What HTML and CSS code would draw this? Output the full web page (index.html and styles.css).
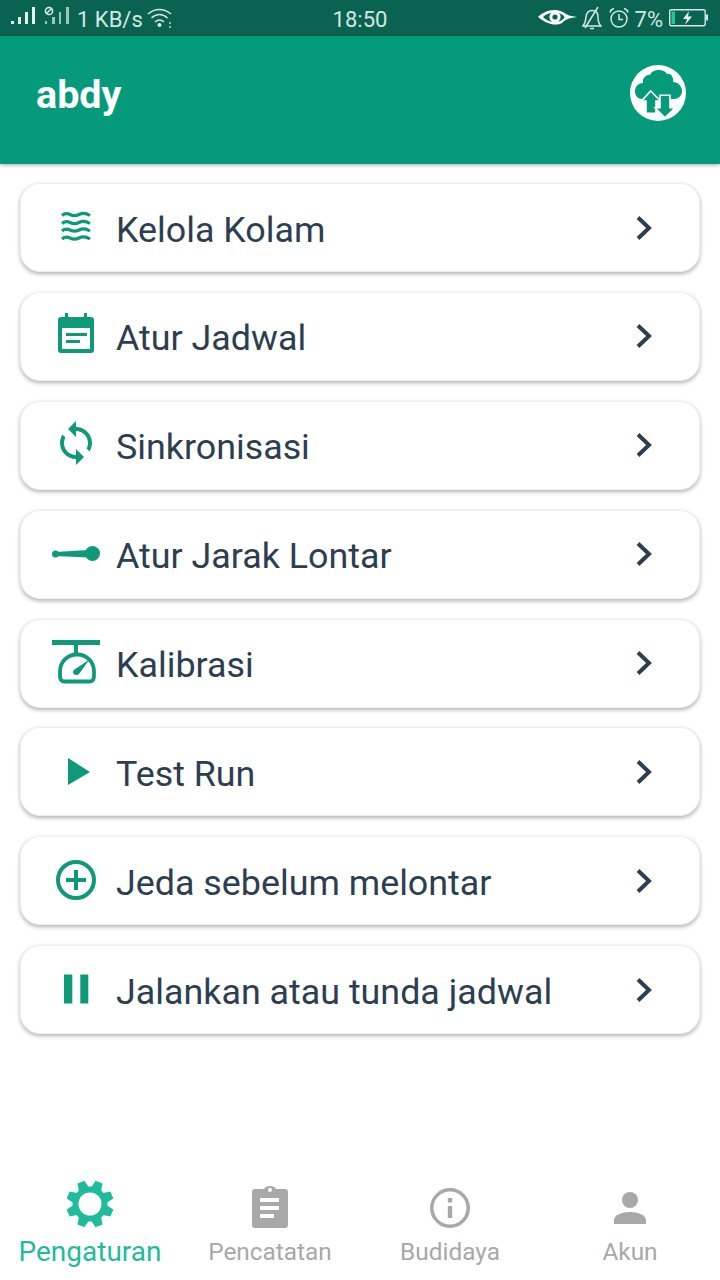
FILE: index.html
```html
<!DOCTYPE html>
<html>
<head>
    <title>Pengaturan</title>
    <meta name="viewport" content="width=device-width, initial-scale=1.0">
    <link rel="stylesheet" href="styles.css">
</head>
<body>
    <div id="screen">
        <div class="status-bar">
            <div class="status-left">
                <svg class="sig" width="25" height="24" viewBox="0 0 25 24"><g fill="#e3f1ec"><rect x="0" y="15" width="3" height="3"/><rect x="7" y="11" width="3" height="7"/><rect x="14" y="6" width="3" height="12"/><rect x="21" y="1" width="3" height="17"/></g></svg>
                <svg class="sig2" width="26" height="24" viewBox="0 0 26 24"><g fill="#9cc8ba"><rect x="1" y="15" width="2" height="3"/><rect x="8" y="11" width="3" height="7"/><rect x="15" y="6" width="2" height="12"/><rect x="22" y="1" width="3" height="17"/></g><circle cx="5" cy="5" r="3.6" fill="none" stroke="#e3f1ec" stroke-width="1.5"/><path d="M2.5 7.5L7.5 2.5" stroke="#e3f1ec" stroke-width="1.5"/></svg>
                <span class="net">1 KB/s</span>
                <svg class="wifi" width="25" height="24" viewBox="0 0 25 24"><g fill="none" stroke="#d3e8e1" stroke-width="1.6"><path d="M1 8C8 2 17 2 24 8"/><path d="M4.5 12C9.5 7.5 15.5 7.5 20.5 12"/><path d="M8 16C10.8 13.5 14.2 13.5 17 16"/></g><circle cx="12.5" cy="19" r="2" fill="#e3f1ec"/><circle cx="23" cy="17" r="1" fill="#b7d8cc"/><circle cx="23" cy="21" r="1" fill="#b7d8cc"/></svg>
            </div>
            <div class="clock">18:50</div>
            <div class="status-right">
                <svg class="eye" width="41" height="24" viewBox="0 0 41 24"><path d="M1 11C8 4 20 1 29 8C32 10 36 10 40 11L34 12C30 13 28 14 25 17C18 21 8 17 1 11Z" fill="#fff"/><path d="M6 11C11 6 20 5 26 9C28 11 28 12 25 14C19 18 11 16 6 11Z" fill="#0a6350"/><circle cx="18" cy="11" r="5.6" fill="#fff"/><circle cx="18" cy="11" r="2.6" fill="#0a6350"/></svg>
                <svg class="bell" width="20" height="24" viewBox="0 0 20 24"><g fill="none" stroke="#d3e8e1" stroke-width="1.5"><path d="M1 20H19C16 17 16 14 16 11C16 7 14 4.500 10 4.500C6 4.500 4.500 7 4 11C3.800 14 3.500 17 1 20Z"/><path d="M16 1L3 22"/><path d="M8 22.500H12"/></g></svg>
                <svg class="alarm" width="20" height="24" viewBox="0 0 20 24"><g fill="none" stroke="#d3e8e1" stroke-width="1.5"><circle cx="10" cy="13" r="8"/><path d="M10 8V13.500H14"/><path d="M1 6.500C1.500 4 3 3 5 2.500"/><path d="M19 6.500C18.500 4 17 3 15 2.500"/></g></svg>
                <span class="pct">7%</span>
                <svg class="batt" width="40" height="24" viewBox="0 0 40 24"><rect x="0.7" y="3.700" width="35.500" height="16" rx="1.500" fill="none" stroke="#d3e8e1" stroke-width="1.400"/><rect x="2.500" y="5.500" width="3.500" height="12.500" fill="#25c79a"/><rect x="37" y="8.500" width="2" height="6" fill="#d3e8e1"/><path d="M20 5L14 13H18L16 19L23 10.500H19L20 5Z" fill="#e3f1ec"/></svg>
            </div>
        </div>

        <div class="app-bar">
            <h1 class="user">abdy</h1>
            <svg class="cloud" width="56" height="56" viewBox="0 0 56 56">
                <circle cx="28" cy="28" r="28" fill="#fff"/>
                <path d="M12 34C7 34 5 30 5 26C5 21 9 18 13 18C12 13 17 9 20 10C22 4 34 3 37 9C41 8 44 13 43 17C48 17 52 21 52 26C52 31 48 34 44 34Z" fill="#059a7a"/>
                <path d="M20.700 26L30.500 36H26V48.300H16V36H11.500Z" fill="#059a7a" stroke="#fff" stroke-width="1.600"/>
                <path d="M35 52.700L45 42.700H40V30.300H30V42.700H25Z" fill="#059a7a" stroke="#fff" stroke-width="1.600"/>
            </svg>
        </div>

        <div class="menu">
            <div class="card">
                <svg class="ic" viewBox="0 0 48 48"><g fill="none" stroke="#0e9a78" stroke-width="3.200"><path d="M10 11.500C13 9 15 9 18 10.500C21 12 24 12 27 10.500C30 9 34 9 38 11.500"/><path d="M10 19.500C13 17 15 17 18 18.500C21 20 24 20 27 18.500C30 17 34 17 38 19.500"/><path d="M10 27C13 24.500 15 24.500 18 26C21 27.500 24 27.500 27 26C30 24.500 34 24.500 38 27"/><path d="M10 35C13 32.500 15 32.500 18 34C21 35.500 24 35.500 27 34C30 32.500 34 32.500 38 35"/></g></svg>
                <span class="label">Kelola Kolam</span>
                <svg class="chev" viewBox="0 0 20 28"><path d="M4 3.500L15 14L4 24.500" fill="none" stroke="#2c3e50" stroke-width="4"/></svg>
            </div>
            <div class="card">
                <svg class="ic" viewBox="0 0 48 48"><path d="M9 5H13V1H16V5H32V1H35V5H39C41 5 42 6 42 8V38C42 40 41 41 39 41H9C7 41 6 40 6 38V8C6 6 7 5 9 5ZM10 16V37H38V16ZM14 21H35V24H14ZM14 28H28V31H14Z" fill="#0e9a78" fill-rule="evenodd"/></svg>
                <span class="label">Atur Jadwal</span>
                <svg class="chev" viewBox="0 0 20 28"><path d="M4 3.500L15 14L4 24.500" fill="none" stroke="#2c3e50" stroke-width="4"/></svg>
            </div>
            <div class="card">
                <svg class="ic" viewBox="0 1 24 24"><path d="M12 4V1L8 5l4 4V6c3.310 0 6 2.690 6 6 0 1.010-.25 1.970-.7 2.800l1.460 1.460C19.540 15.030 20 13.570 20 12c0-4.420-3.580-8-8-8zm0 14c-3.310 0-6-2.690-6-6 0-1.010.25-1.970.7-2.800L5.240 7.740C4.460 8.970 4 10.430 4 12c0 4.420 3.580 8 8 8v3l4-4-4-4v3z" fill="#0e9a78"/></svg>
                <span class="label">Sinkronisasi</span>
                <svg class="chev" viewBox="0 0 20 28"><path d="M4 3.500L15 14L4 24.500" fill="none" stroke="#2c3e50" stroke-width="4"/></svg>
            </div>
            <div class="card">
                <svg class="ic" viewBox="0 0 48 48"><circle cx="3.500" cy="24" r="3.500" fill="#0e9a78"/><circle cx="40.500" cy="23.500" r="7.500" fill="#0e9a78"/><path d="M3 22L36 20V27.500L3 26Z" fill="#0e9a78"/></svg>
                <span class="label">Atur Jarak Lontar</span>
                <svg class="chev" viewBox="0 0 20 28"><path d="M4 3.500L15 14L4 24.500" fill="none" stroke="#2c3e50" stroke-width="4"/></svg>
            </div>
            <div class="card">
                <svg class="ic" viewBox="0 0 48 48"><rect x="0" y="1" width="48" height="5" fill="#0e9a78"/><rect x="22" y="6" width="4" height="9" fill="#0e9a78"/><path d="M25 15.500C34 15.500 42 22 42 33C42 37 42.500 42.500 38 42.500H12C7.500 42.500 8 37 8 33C8 22 16 15.500 25 15.500Z" fill="none" stroke="#0e9a78" stroke-width="3.800"/><path d="M37.500 20.500L27 35C25 37 21 36 21 33C21 31 23 30 24 29.500Z" fill="#0e9a78"/></svg>
                <span class="label">Kalibrasi</span>
                <svg class="chev" viewBox="0 0 20 28"><path d="M4 3.500L15 14L4 24.500" fill="none" stroke="#2c3e50" stroke-width="4"/></svg>
            </div>
            <div class="card">
                <svg class="ic" viewBox="0 0 48 48"><path d="M16 10L38 24L16 37Z" fill="#0e9a78"/></svg>
                <span class="label">Test Run</span>
                <svg class="chev" viewBox="0 0 20 28"><path d="M4 3.500L15 14L4 24.500" fill="none" stroke="#2c3e50" stroke-width="4"/></svg>
            </div>
            <div class="card">
                <svg class="ic" viewBox="0 0 48 48"><circle cx="24" cy="23" r="18" fill="none" stroke="#0e9a78" stroke-width="4"/><path d="M14 23H34M24 13V33" stroke="#0e9a78" stroke-width="4"/></svg>
                <span class="label">Jeda sebelum melontar</span>
                <svg class="chev" viewBox="0 0 20 28"><path d="M4 3.500L15 14L4 24.500" fill="none" stroke="#2c3e50" stroke-width="4"/></svg>
            </div>
            <div class="card">
                <svg class="ic" viewBox="0 0 48 48"><rect x="12" y="8.500" width="8.300" height="29" fill="#0e9a78"/><rect x="28.300" y="8.500" width="8" height="29" fill="#0e9a78"/></svg>
                <span class="label">Jalankan atau tunda jadwal</span>
                <svg class="chev" viewBox="0 0 20 28"><path d="M4 3.500L15 14L4 24.500" fill="none" stroke="#2c3e50" stroke-width="4"/></svg>
            </div>
        </div>

        <div class="tabs">
            <div class="tab active">
                <svg class="tab-ic" viewBox="0 0 48 48">
                    <g fill="#1fbc9c">
                        <circle cx="24" cy="24" r="17.500"/>
                        <polygon points="18.500,9 20.200,0.300 27.800,0.300 29.500,9" transform="rotate(22.500 24 24)"/>
                        <polygon points="18.500,9 20.200,0.300 27.800,0.300 29.500,9" transform="rotate(67.500 24 24)"/>
                        <polygon points="18.500,9 20.200,0.300 27.800,0.300 29.500,9" transform="rotate(112.500 24 24)"/>
                        <polygon points="18.500,9 20.200,0.300 27.800,0.300 29.500,9" transform="rotate(157.500 24 24)"/>
                        <polygon points="18.500,9 20.200,0.300 27.800,0.300 29.500,9" transform="rotate(202.500 24 24)"/>
                        <polygon points="18.500,9 20.200,0.300 27.800,0.300 29.500,9" transform="rotate(247.500 24 24)"/>
                        <polygon points="18.500,9 20.200,0.300 27.800,0.300 29.500,9" transform="rotate(292.500 24 24)"/>
                        <polygon points="18.500,9 20.200,0.300 27.800,0.300 29.500,9" transform="rotate(337.500 24 24)"/>
                    </g>
                    <circle cx="24" cy="24" r="11.500" fill="#fff"/>
                </svg>
                <span class="tab-label">Pengaturan</span>
            </div>
            <div class="tab">
                <svg class="tab-ic" viewBox="0 -5 48 48"><path d="M9 4H18C19 0 29 0 30 4H39C41 4 42 5 42 7V40C42 42 41 43 39 43H9C7 43 6 42 6 40V7C6 5 7 4 9 4Z" fill="#a8a8a8"/><circle cx="24" cy="5" r="2" fill="#fff"/><rect x="14" y="13" width="19" height="4" fill="#fff"/><rect x="14" y="21" width="19" height="4" fill="#fff"/><rect x="14" y="29" width="14" height="4" fill="#fff"/></svg>
                <span class="tab-label">Pencatatan</span>
            </div>
            <div class="tab">
                <svg class="tab-ic" viewBox="0 -4 48 48"><circle cx="24" cy="24" r="18.200" fill="none" stroke="#a8a8a8" stroke-width="3.500"/><rect x="21.800" y="22" width="4.400" height="12" fill="#a8a8a8"/><rect x="21.800" y="14" width="4.400" height="4.500" fill="#a8a8a8"/></svg>
                <span class="tab-label">Budidaya</span>
            </div>
            <div class="tab">
                <svg class="tab-ic" viewBox="0 -4 48 48"><circle cx="24" cy="16" r="8" fill="#a8a8a8"/><path d="M8 40V36C8 31 16 28 24 28C32 28 40 31 40 36V40Z" fill="#a8a8a8"/></svg>
                <span class="tab-label">Akun</span>
            </div>
        </div>
    </div>
</body>
</html>
```

FILE: styles.css
```css
body {
    font-family: Roboto, Arial, sans-serif;
    background-color: #fff;
    margin: 0;
    padding: 0;
}
#screen {
    width: 720px;
    height: 1280px;
    display: flex;
    flex-direction: column;
    overflow: hidden;
}
.status-bar {
    height: 36px;
    flex: none;
    background-color: #0a6350;
    color: #d3e8e1;
    font-size: 22px;
    display: grid;
    grid-template-columns: 1fr auto 1fr;
    align-items: center;
}
.clock,
.net,
.pct {
    padding-top: 2px;
}
.status-left {
    display: flex;
    align-items: center;
    padding-left: 11px;
}
.status-left svg,
.status-right svg {
    display: block;
}
.sig2 {
    margin-left: 8px;
}
.net {
    margin-left: 7px;
}
.wifi {
    margin-left: 4px;
}
.status-right {
    display: flex;
    align-items: center;
    justify-content: flex-end;
    padding-right: 11px;
}
.bell {
    margin-left: 4px;
}
.alarm {
    margin-left: 7px;
}
.pct {
    margin-left: 6px;
}
.batt {
    margin-left: 6px;
}
.app-bar {
    height: 128px;
    flex: none;
    box-sizing: border-box;
    background-color: #059a7a;
    box-shadow: 0 1px 4px rgba(0, 0, 0, 0.35);
    display: flex;
    align-items: center;
    justify-content: space-between;
    padding: 0 34px 15px 36px;
    position: relative;
}
.user {
    margin: 0;
    padding-top: 3px;
    color: #fff;
    font-size: 39.5px;
    font-weight: bold;
}
.menu {
    display: flex;
    flex-direction: column;
    gap: 19.9px;
    padding: 19px 20px 0;
}
.card {
    height: 89px;
    box-sizing: border-box;
    background-color: #fff;
    border: 1px solid #efefef;
    border-radius: 20px;
    box-shadow: 0 2px 4px rgba(0, 0, 0, 0.3);
    display: flex;
    align-items: center;
    padding-left: 31px;
}
.ic {
    width: 48px;
    height: 48px;
    flex: none;
}
.label {
    margin-left: 16px;
    font-size: 35.85px;
    color: #2c3e50;
    padding-top: 4px;
}
.chev {
    width: 20px;
    height: 28px;
    margin-left: auto;
    margin-right: 45px;
}
.tabs {
    margin-top: auto;
    display: grid;
    grid-template-columns: repeat(4, 1fr);
    padding-bottom: 12px;
}
.tab {
    display: flex;
    flex-direction: column;
    align-items: center;
    color: #a8a8a8;
}
.tab-ic {
    width: 48px;
    height: 48px;
}
.tab-label {
    font-size: 24.4px;
    line-height: 32px;
    margin-top: 8px;
}
.tab.active {
    color: #1fbc9c;
}
.tab.active .tab-label {
    font-size: 28px;
}
```
